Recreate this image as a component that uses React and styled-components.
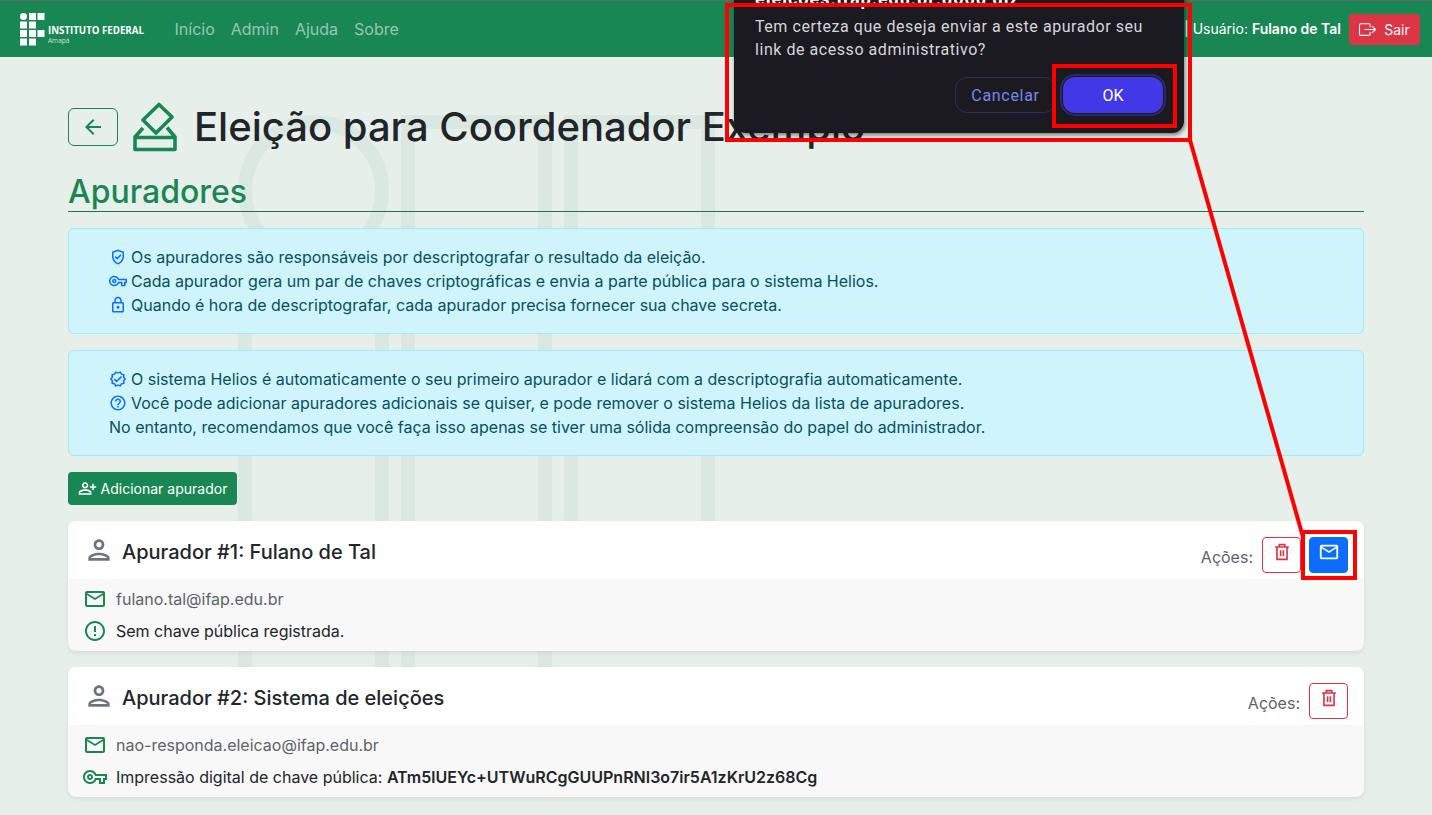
import React from 'react';
import styled, { createGlobalStyle } from 'styled-components';
import {
  MdArrowBack,
  MdErrorOutline,
  MdHelpOutline,
  MdOutlineGppGood,
  MdOutlineLock,
  MdOutlineMail,
  MdOutlinePerson,
  MdOutlinePersonAddAlt,
  MdOutlineVerified,
  MdOutlineVpnKey,
} from 'react-icons/md';
import { BsBoxArrowRight } from 'react-icons/bs';

const GREEN = '#198754';

const GlobalStyle = createGlobalStyle`
  html, body {
    margin: 0;
    padding: 0;
    background: #e6efe9;
    color: #212529;
    font-family: Inter, "Liberation Sans", sans-serif;
    font-size: 16px;
    line-height: 24px;
  }
  * { box-sizing: border-box; }
`;

const Page = styled.div`
  position: relative;
  height: 815px;
  overflow: hidden;
`;

const Watermark = styled.svg`
  position: absolute;
  left: 231px;
  top: 108px;
  z-index: 0;
`;

const Navbar = styled.nav`
  position: relative;
  z-index: 1;
  height: 57px;
  background: ${GREEN};
  border-top: 1px solid #5f6b6b;
  display: flex;
  align-items: center;
  padding: 0 12px 0 20px;
`;

const Brand = styled.div`
  display: flex;
  align-items: flex-start;
  gap: 3px;
  width: 154.5px;
`;

const BrandText = styled.div`
  margin-top: 13px;
  color: #fff;
  font-family: "Open Sans", sans-serif;
  font-size: 9.7px;
  font-weight: 700;
  line-height: 10px;
  white-space: nowrap;
  span {
    display: block;
    font-size: 6.5px;
    font-weight: 400;
    line-height: 9px;
    color: #cfe5d9;
  }
`;

const NavLinks = styled.div`
  display: flex;
  gap: 16px;
`;

const NavLink = styled.a`
  color: rgba(255, 255, 255, 0.55);
  font-size: 16px;
`;

const NavRight = styled.div`
  margin-left: auto;
  display: flex;
  align-items: center;
  gap: 8px;
  color: #fff;
  font-size: 14px;
  white-space: nowrap;
  b { font-weight: 600; }
`;

const LogoutButton = styled.button`
  height: 31px;
  width: 71px;
  display: flex;
  align-items: center;
  justify-content: center;
  gap: 8px;
  background: #dc3545;
  border: none;
  border-radius: 4px;
  color: #fff;
  font: 14px Inter, sans-serif;
`;

const Main = styled.main`
  position: relative;
  z-index: 1;
  padding: 44px 68px 0;
`;

const TitleRow = styled.div`
  display: flex;
  align-items: center;
  height: 52px;
  margin-bottom: 20px;
`;

const BackButton = styled.button`
  width: 50px;
  height: 38px;
  display: flex;
  align-items: center;
  justify-content: center;
  background: transparent;
  border: 1px solid ${GREEN};
  border-radius: 6px;
  color: ${GREEN};
  font-size: 24px;
`;

const BallotSvg = styled.svg`
  flex: none;
  margin: 0 16px 0 14px;
  color: ${GREEN};
`;

const Title = styled.h1`
  margin: 0;
  font-size: 40px;
  font-weight: 500;
  line-height: 48px;
  white-space: nowrap;
`;

const Section = styled.h2`
  margin: 0 0 16px;
  height: 39px;
  border-bottom: 1px solid #20734d;
  color: ${GREEN};
  font-size: 32px;
  font-weight: 500;
  line-height: 38px;
`;

const Alert = styled.div`
  margin-bottom: 16px;
  padding: 16px 16px 16px 40px;
  height: 106px;
  background: #cff4fc;
  border: 1px solid #9eeaf9;
  border-radius: 6px;
  color: #055160;
`;

const AlertLine = styled.div`
  display: flex;
  align-items: center;
  gap: 4px;
  height: 24px;
  white-space: nowrap;
  svg {
    color: #0d6efd;
    font-size: 18px;
    width: 18px;
  }
`;

const AddButton = styled.button`
  height: 33px;
  width: 169px;
  margin-bottom: 16px;
  display: flex;
  align-items: center;
  justify-content: center;
  gap: 4px;
  background: ${GREEN};
  border: none;
  border-radius: 4px;
  color: #fff;
  font: 14px Inter, sans-serif;
  svg { font-size: 19px; }
`;

const Card = styled.section`
  margin-bottom: 16px;
  border-radius: 8px;
  background: #f8f8f8;
  box-shadow: 0 2px 4px rgba(0, 0, 0, 0.08);
  overflow: hidden;
`;

const CardHeader = styled.header`
  height: 58px;
  padding: 0 16px 0 14.5px;
  display: flex;
  align-items: center;
  background: #fff;
`;

const PersonIcon = styled(MdOutlinePerson)`
  margin-right: 7.5px;
  color: #6c757d;
  font-size: 32px;
`;

const CardTitle = styled.h5`
  margin: 3px 0 0;
  font-size: 20px;
  font-weight: 500;
  line-height: 24px;
`;

const Actions = styled.div`
  margin-left: auto;
  margin-top: 10px;
  display: flex;
  align-items: center;
  gap: 8px;
  color: #5c636a;
`;

const ActionsLabel = styled.span`
  margin: 4px 1px 0 0;
`;

const ActionButton = styled.button`
  width: 39px;
  height: 36px;
  display: flex;
  align-items: center;
  justify-content: center;
  padding: 0 0 6px;
  border-radius: 4px;
  border: 1px solid ${(p) => (p.$primary ? '#0d6efd' : '#dc3545')};
  background: ${(p) => (p.$primary ? '#0d6efd' : 'transparent')};
  color: ${(p) => (p.$primary ? '#fff' : '#dc3545')};
  font-size: 22px;
`;

const CardBody = styled.div`
  height: 72px;
  padding: 4px 16px 0 15px;
`;

const InfoRow = styled.div`
  display: flex;
  align-items: center;
  height: 32px;
  gap: 9px;
  color: ${(p) => (p.$muted ? '#5c636a' : '#212529')};
  svg {
    flex: none;
    color: ${GREEN};
    font-size: 24px;
  }
  b { font-weight: 600; }
`;

const Dialog = styled.div`
  position: absolute;
  z-index: 2;
  left: 734px;
  top: -29px;
  width: 450px;
  height: 162px;
  padding: 16px 21px 0;
  background: #1a1a20;
  border-radius: 12px;
  box-shadow: 1px 2px 4px rgba(0, 0, 0, 0.5);
  color: #d6d6da;
  font-family: Roboto, sans-serif;
  font-size: 16px;
  letter-spacing: 0.55px;
  line-height: 23px;
`;

const DialogTitle = styled.div`
  height: 28px;
  color: #fff;
  font-size: 18px;
  font-weight: 700;
  letter-spacing: 1px;
`;

const DialogText = styled.p`
  margin: 0;
`;

const DialogButtons = styled.div`
  margin-top: 16px;
  display: flex;
  justify-content: flex-end;
  align-items: center;
  gap: 7px;
`;

const CancelButton = styled.button`
  width: 101px;
  height: 36px;
  background: transparent;
  border: 1px solid #2b2f5c;
  border-radius: 12px;
  color: #7b86ec;
  font: 400 16px Roboto, sans-serif;
  letter-spacing: 0.7px;
`;

const OkButton = styled.button`
  width: 100px;
  height: 36px;
  background: #4338e8;
  border: none;
  border-radius: 12px;
  outline: 2px solid #2a2a6a;
  outline-offset: 1px;
  color: #fff;
  font: 400 16px Roboto, sans-serif;
`;

const Annotations = styled.svg`
  position: absolute;
  z-index: 3;
  left: 0;
  top: 0;
  pointer-events: none;
`;

const TrashIcon = () => (
  <svg width="1em" height="1em" viewBox="0 0 24 24" fill="none" stroke="currentColor" strokeWidth="1.8">
    <path d="M4.5 6.5h15M9 6.5V4h6v2.5M6.5 6.5V20h11V6.5M10.5 10v6.5M13.5 10v6.5" />
  </svg>
);

const BallotIcon = () => (
  <BallotSvg width="46" height="50" viewBox="0 0 46 50" fill="none" stroke="currentColor" strokeWidth="3.6" strokeLinejoin="round">
    <path d="M27 2.5 40 15 24 31 11 18Z" />
    <path d="M11 26 3 35v12.5h40V35l-8-9.5M3 35.5h40" />
  </BallotSvg>
);

const LogoMark = () => (
  <svg width="25" height="33" viewBox="0 0 25 33" fill="#fff">
    <circle cx="3.5" cy="3.5" r="3.5" />
    <rect x="9" y="0" width="7" height="7" />
    <rect x="17.5" y="0" width="7" height="7" />
    <rect x="0" y="8.5" width="7" height="7" />
    <rect x="9" y="8.5" width="7" height="7" />
    <rect x="0" y="17" width="7" height="7" />
    <rect x="9" y="17" width="7" height="7" />
    <rect x="17.5" y="17" width="7" height="7" />
    <rect x="0" y="25.5" width="7" height="7" />
    <rect x="9" y="25.5" width="7" height="7" />
  </svg>
);

const marks = [
  [163, 0], [326, 0],
  [0, 163], [163, 163],
  [0, 326], [163, 326], [326, 326],
  [0, 489], [163, 489],
];

const BackgroundLogo = () => (
  <Watermark width="490" height="650" viewBox="0 0 490 650" fill="none" stroke="#dbe8e1" strokeWidth="14">
    <circle cx="82.5" cy="82.5" r="68.5" />
    {marks.map(([x, y]) => (
      <rect key={`${x}-${y}`} x={x + 14} y={y + 14} width="137" height="137" />
    ))}
  </Watermark>
);

const Apurador = ({ title, email, actions, children }) => (
  <Card>
    <CardHeader>
      <PersonIcon />
      <CardTitle>{title}</CardTitle>
      <Actions>
        <ActionsLabel>Ações:</ActionsLabel>
        <ActionButton><TrashIcon /></ActionButton>
        {actions && <ActionButton $primary><MdOutlineMail /></ActionButton>}
      </Actions>
    </CardHeader>
    <CardBody>
      <InfoRow $muted>
        <MdOutlineMail />
        {email}
      </InfoRow>
      <InfoRow>{children}</InfoRow>
    </CardBody>
  </Card>
);

export default function App() {
  return (
    <Page>
      <GlobalStyle />
      <BackgroundLogo />
      <Navbar>
        <Brand>
          <LogoMark />
          <BrandText>
            INSTITUTO FEDERAL
            <span>Amapá</span>
          </BrandText>
        </Brand>
        <NavLinks>
          <NavLink>Início</NavLink>
          <NavLink>Admin</NavLink>
          <NavLink>Ajuda</NavLink>
          <NavLink>Sobre</NavLink>
        </NavLinks>
        <NavRight>
          <span>| Usuário: <b>Fulano de Tal</b></span>
          <LogoutButton><BsBoxArrowRight size={17} /> Sair</LogoutButton>
        </NavRight>
      </Navbar>
      <Main>
        <TitleRow>
          <BackButton><MdArrowBack /></BackButton>
          <BallotIcon />
          <Title>Eleição para Coordenador Exemplo</Title>
        </TitleRow>
        <Section>Apuradores</Section>
        <Alert>
          <AlertLine><MdOutlineGppGood /> Os apuradores são responsáveis por descriptografar o resultado da eleição.</AlertLine>
          <AlertLine><MdOutlineVpnKey /> Cada apurador gera um par de chaves criptográficas e envia a parte pública para o sistema Helios.</AlertLine>
          <AlertLine><MdOutlineLock /> Quando é hora de descriptografar, cada apurador precisa fornecer sua chave secreta.</AlertLine>
        </Alert>
        <Alert>
          <AlertLine><MdOutlineVerified /> O sistema Helios é automaticamente o seu primeiro apurador e lidará com a descriptografia automaticamente.</AlertLine>
          <AlertLine><MdHelpOutline /> Você pode adicionar apuradores adicionais se quiser, e pode remover o sistema Helios da lista de apuradores.</AlertLine>
          <AlertLine>No entanto, recomendamos que você faça isso apenas se tiver uma sólida compreensão do papel do administrador.</AlertLine>
        </Alert>
        <AddButton><MdOutlinePersonAddAlt /> Adicionar apurador</AddButton>
        <Apurador title="Apurador #1: Fulano de Tal" email="fulano.tal@ifap.edu.br" actions>
          <MdErrorOutline />
          Sem chave pública registrada.
        </Apurador>
        <Apurador title="Apurador #2: Sistema de eleições" email="nao-responda.eleicao@ifap.edu.br">
          <MdOutlineVpnKey />
          <span>Impressão digital de chave pública: <b>ATm5lUEYc+UTWuRCgGUUPnRNI3o7ir5A1zKrU2z68Cg</b></span>
        </Apurador>
      </Main>
      <Dialog>
        <DialogTitle>eleicoes.ifap.edu.br:8000 diz</DialogTitle>
        <DialogText>Tem certeza que deseja enviar a este apurador seu link de acesso administrativo?</DialogText>
        <DialogButtons>
          <CancelButton>Cancelar</CancelButton>
          <OkButton>OK</OkButton>
        </DialogButtons>
      </Dialog>
      <Annotations width="1432" height="815" fill="none" stroke="#ff0000" strokeWidth="4">
        <rect x="727" y="5" width="463" height="135" />
        <rect x="1054" y="66" width="121" height="60" />
        <rect x="1303" y="532" width="52" height="46" />
        <path d="M1190 140 L1303 537" />
      </Annotations>
    </Page>
  );
}
